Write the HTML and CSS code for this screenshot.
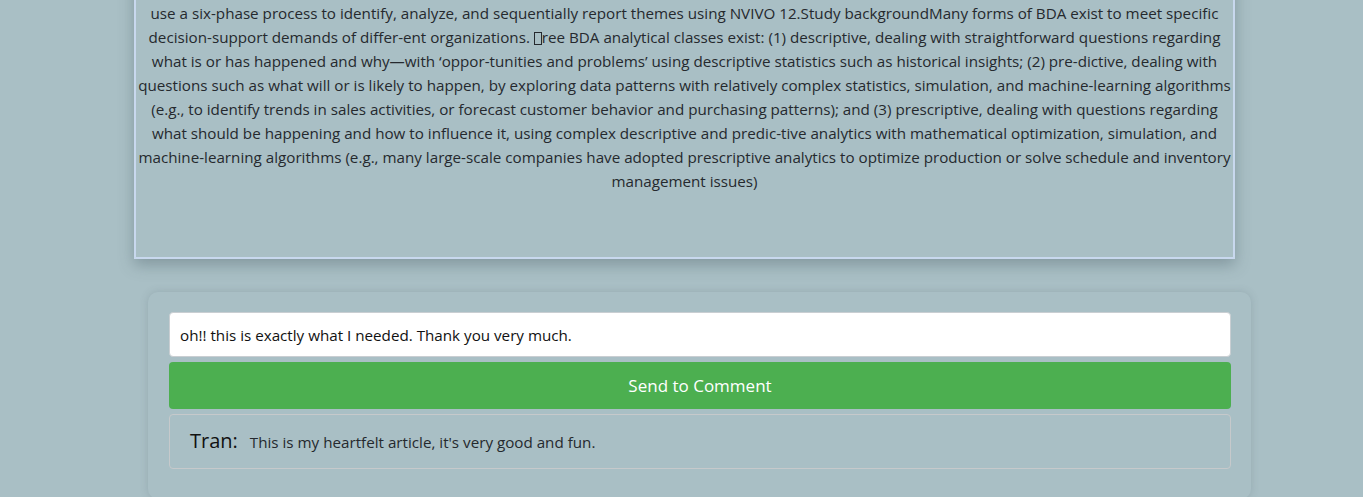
FILE: index.html
```html
<!DOCTYPE html>
<html lang="en">
<head>
<meta charset="utf-8">
<title>Article</title>
<link rel="stylesheet" href="styles.css">
</head>
<body>
<main class="page">
  <section class="article">
    <p class="article-text">use a six-phase process to identify, analyze, and sequentially report themes using NVIVO 12.Study backgroundMany forms of BDA exist to meet specific<br>decision-support demands of differ-ent organizations. <span class="tofu"></span>ree BDA analytical classes exist: (1) descriptive, dealing with straightforward questions regarding<br>what is or has happened and why—with ‘oppor-tunities and problems’ using descriptive statistics such as historical insights; (2) pre-dictive, dealing with<br>questions such as what will or is likely to happen, by exploring data patterns with relatively complex statistics, simulation, and machine-learning algorithms<br>(e.g., to identify trends in sales activities, or forecast customer behavior and purchasing patterns); and (3) prescriptive, dealing with questions regarding<br>what should be happening and how to influence it, using complex descriptive and predic-tive analytics with mathematical optimization, simulation, and<br>machine-learning algorithms (e.g., many large-scale companies have adopted prescriptive analytics to optimize production or solve schedule and inventory<br>management issues)</p>
  </section>
  <section class="comments">
    <input class="comment-input" type="text" value="oh!! this is exactly what I needed. Thank you very much.">
    <button class="send" type="button">Send to Comment</button>
    <div class="comment">
      <span class="author">Tran:</span>
      <span class="message">This is my heartfelt article, it's very good and fun.</span>
    </div>
  </section>
</main>
</body>
</html>
```

FILE: styles.css
```css
html, body {
  margin: 0;
  padding: 0;
  background: #a9bfc5;
  font-family: "Open Sans", "Noto Sans", sans-serif;
  color: #25292e;
  overflow: hidden;
}

.page {
  display: flex;
  flex-direction: column;
}

.article {
  box-sizing: border-box;
  margin: -30px 0 0 134px;
  width: 1101px;
  height: 289px;
  padding-top: 29px;
  border: 2px solid #c8d8ee;
  box-shadow: 0 6px 14px rgba(60, 80, 90, 0.35);
}

.article-text {
  margin: 0;
  text-align: center;
  font-size: 15.2px;
  line-height: 24px;
  white-space: nowrap;
}

.tofu {
  display: inline-block;
  width: 8px;
  height: 13px;
  border: 1px solid #25292e;
  vertical-align: -2px;
  box-sizing: border-box;
}

.comments {
  box-sizing: border-box;
  margin: 33px 0 0 148px;
  width: 1103px;
  padding: 20px 20px 30px 21px;
  border-radius: 10px;
  background: #a9bfc5;
  box-shadow: 0 0 8px rgba(60, 80, 90, 0.18);
  display: flex;
  flex-direction: column;
  gap: 5px;
}

.comment-input {
  box-sizing: border-box;
  height: 45px;
  padding: 0 10px;
  border: 1px solid #c9ced2;
  border-radius: 4px;
  background: #fff;
  font: 15.2px "Open Sans", "Noto Sans", sans-serif;
  color: #111;
}

.send {
  height: 47px;
  border: none;
  border-radius: 4px;
  background: #4caf50;
  color: #fff;
  font: 17px "Open Sans", "Noto Sans", sans-serif;
  cursor: pointer;
}

.comment {
  box-sizing: border-box;
  height: 55px;
  display: flex;
  align-items: baseline;
  gap: 12px;
  padding: 12px 20px 0;
  border: 1px solid #c6c9cb;
  border-radius: 4px;
}

.author {
  font-size: 20px;
  color: #111;
}

.message {
  font-size: 15.2px;
  color: #25292e;
}
```
